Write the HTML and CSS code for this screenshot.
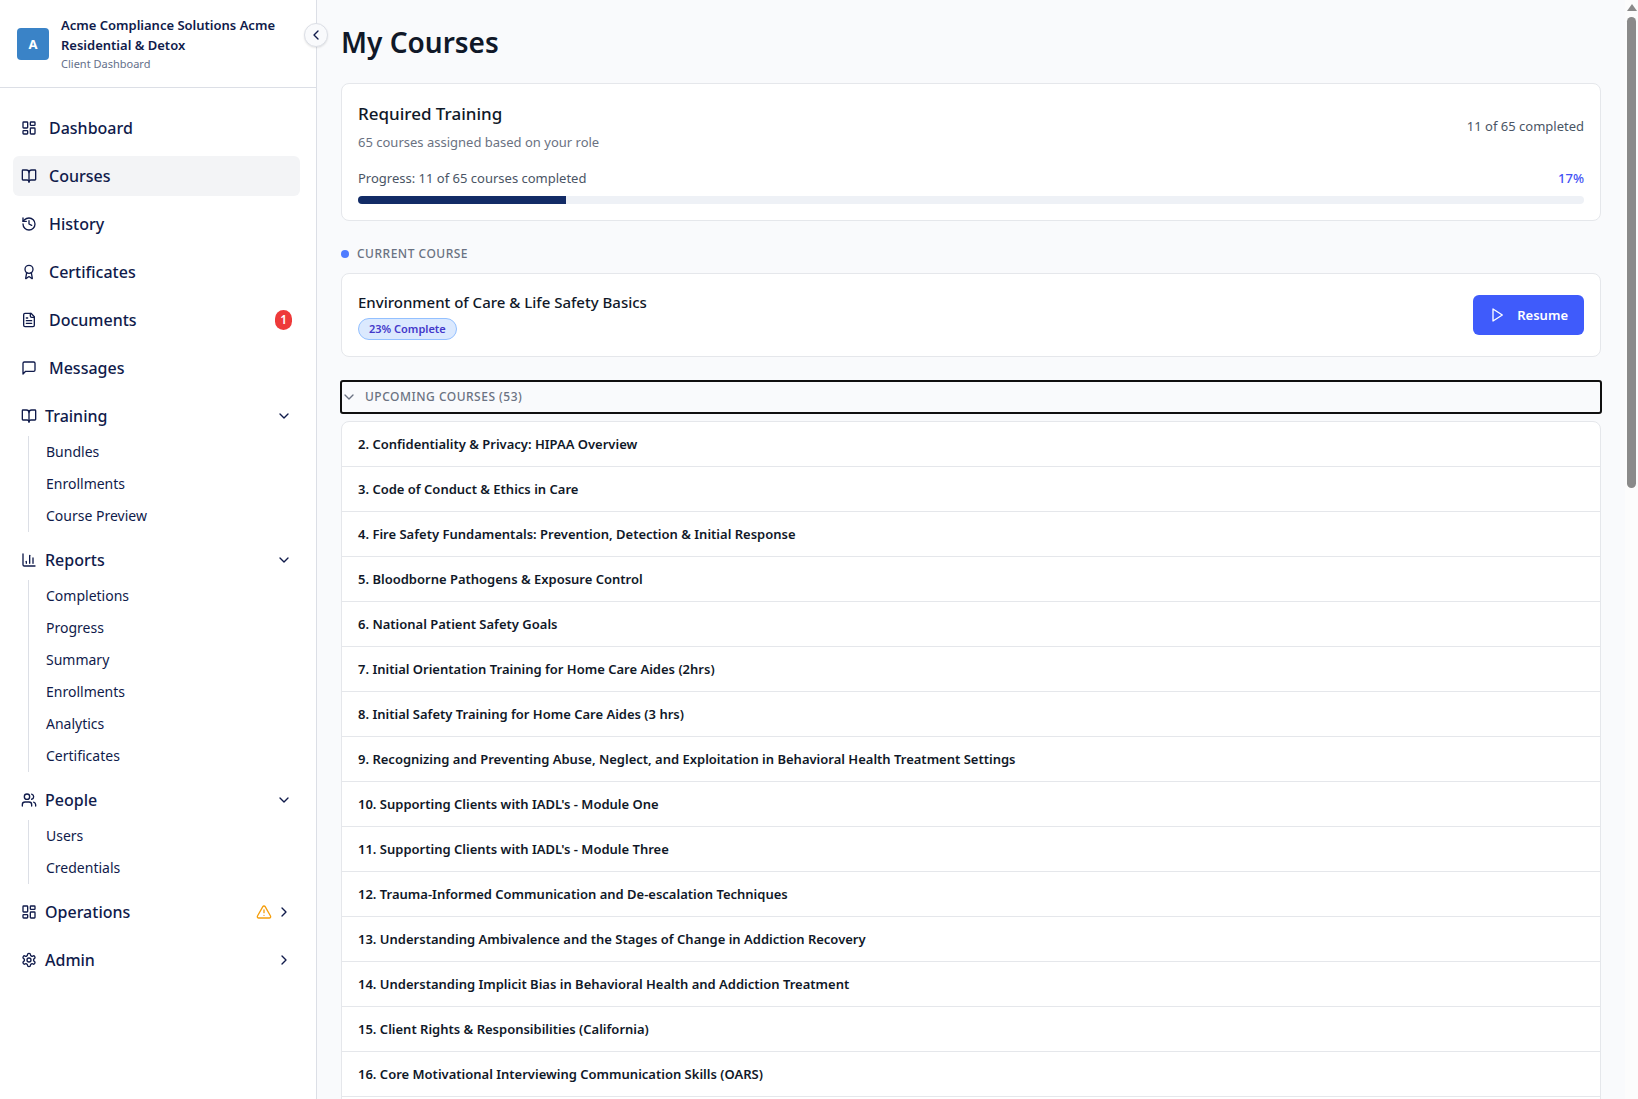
FILE: index.html
```html
<!DOCTYPE html>
<html lang="en">
<head>
<meta charset="utf-8">
<meta name="viewport" content="width=device-width, initial-scale=1">
<title>My Courses</title>
<link rel="stylesheet" href="styles.css">
</head>
<body>
<svg class="sprite" aria-hidden="true">
  <symbol id="i-dashboard" viewBox="0 0 24 24"><rect width="7" height="9" x="3" y="3" rx="1"/><rect width="7" height="5" x="14" y="3" rx="1"/><rect width="7" height="9" x="14" y="12" rx="1"/><rect width="7" height="5" x="3" y="16" rx="1"/></symbol>
  <symbol id="i-book" viewBox="0 0 24 24"><path d="M12 7v14"/><path d="M3 18a1 1 0 0 1-1-1V4a1 1 0 0 1 1-1h5a4 4 0 0 1 4 4 4 4 0 0 1 4-4h5a1 1 0 0 1 1 1v13a1 1 0 0 1-1 1h-6a3 3 0 0 0-3 3 3 3 0 0 0-3-3z"/></symbol>
  <symbol id="i-history" viewBox="0 0 24 24"><path d="M3 12a9 9 0 1 0 9-9 9.75 9.75 0 0 0-6.74 2.74L3 8"/><path d="M3 3v5h5"/><path d="M12 7v5l4 2"/></symbol>
  <symbol id="i-award" viewBox="0 0 24 24"><path d="m15.477 12.89 1.515 8.526a.5.5 0 0 1-.81.47l-3.58-2.687a1 1 0 0 0-1.197 0l-3.586 2.686a.5.5 0 0 1-.81-.469l1.514-8.526"/><circle cx="12" cy="8" r="6"/></symbol>
  <symbol id="i-file" viewBox="0 0 24 24"><path d="M15 2H6a2 2 0 0 0-2 2v16a2 2 0 0 0 2 2h12a2 2 0 0 0 2-2V7Z"/><path d="M14 2v4a2 2 0 0 0 2 2h4"/><path d="M10 9H8"/><path d="M16 13H8"/><path d="M16 17H8"/></symbol>
  <symbol id="i-message" viewBox="0 0 24 24"><path d="M21 15a2 2 0 0 1-2 2H7l-4 4V5a2 2 0 0 1 2-2h14a2 2 0 0 1 2 2z"/></symbol>
  <symbol id="i-chart" viewBox="0 0 24 24"><path d="M3 3v16a2 2 0 0 0 2 2h16"/><path d="M18 17V9"/><path d="M13 17V5"/><path d="M8 17v-3"/></symbol>
  <symbol id="i-users" viewBox="0 0 24 24"><path d="M16 21v-2a4 4 0 0 0-4-4H6a4 4 0 0 0-4 4v2"/><circle cx="9" cy="7" r="4"/><path d="M22 21v-2a4 4 0 0 0-3-3.87"/><path d="M16 3.13a4 4 0 0 1 0 7.75"/></symbol>
  <symbol id="i-settings" viewBox="0 0 24 24"><path d="M12.22 2h-.44a2 2 0 0 0-2 2v.18a2 2 0 0 1-1 1.73l-.43.25a2 2 0 0 1-2 0l-.15-.08a2 2 0 0 0-2.73.73l-.22.38a2 2 0 0 0 .73 2.73l.15.1a2 2 0 0 1 1 1.72v.51a2 2 0 0 1-1 1.74l-.15.09a2 2 0 0 0-.73 2.73l.22.38a2 2 0 0 0 2.73.73l.15-.08a2 2 0 0 1 2 0l.43.25a2 2 0 0 1 1 1.73V20a2 2 0 0 0 2 2h.44a2 2 0 0 0 2-2v-.18a2 2 0 0 1 1-1.73l.43-.25a2 2 0 0 1 2 0l.15.08a2 2 0 0 0 2.73-.73l.22-.39a2 2 0 0 0-.73-2.73l-.15-.08a2 2 0 0 1-1-1.74v-.5a2 2 0 0 1 1-1.74l.15-.09a2 2 0 0 0 .73-2.73l-.22-.38a2 2 0 0 0-2.73-.73l-.15.08a2 2 0 0 1-2 0l-.43-.25a2 2 0 0 1-1-1.73V4a2 2 0 0 0-2-2z"/><circle cx="12" cy="12" r="3"/></symbol>
  <symbol id="i-warning" viewBox="0 0 24 24"><path d="m21.73 18-8-14a2 2 0 0 0-3.48 0l-8 14A2 2 0 0 0 4 21h16a2 2 0 0 0 1.73-3"/><path d="M12 9v4"/><path d="M12 17h.01"/></symbol>
  <symbol id="i-down" viewBox="0 0 24 24"><path d="m6 9 6 6 6-6"/></symbol>
  <symbol id="i-right" viewBox="0 0 24 24"><path d="m9 18 6-6-6-6"/></symbol>
  <symbol id="i-left" viewBox="0 0 24 24"><path d="m15 18-6-6 6-6"/></symbol>
  <symbol id="i-play" viewBox="0 0 24 24"><path d="M6 3 20 12 6 21z"/></symbol>
</svg>

<div class="app">
  <aside class="sidebar">
    <header class="brand">
      <span class="brand-logo">A</span>
      <div class="brand-text">
        <p class="brand-name">Acme Compliance Solutions Acme Residential &amp; Detox</p>
        <p class="brand-sub">Client Dashboard</p>
      </div>
    </header>
    <button class="collapse" type="button" aria-label="Collapse sidebar"><svg class="icon"><use href="#i-left"/></svg></button>

    <nav class="nav" aria-label="Main">
      <a class="nav-item" href="#"><svg class="icon"><use href="#i-dashboard"/></svg>Dashboard</a>
      <a class="nav-item active" href="#" aria-current="page"><svg class="icon"><use href="#i-book"/></svg>Courses</a>
      <a class="nav-item" href="#"><svg class="icon"><use href="#i-history"/></svg>History</a>
      <a class="nav-item" href="#"><svg class="icon"><use href="#i-award"/></svg>Certificates</a>
      <a class="nav-item" href="#"><svg class="icon"><use href="#i-file"/></svg>Documents<span class="count">1</span></a>
      <a class="nav-item" href="#"><svg class="icon"><use href="#i-message"/></svg>Messages</a>

      <section>
        <button class="nav-group" type="button" aria-expanded="true"><svg class="icon"><use href="#i-book"/></svg><span class="nav-label">Training</span><svg class="icon"><use href="#i-down"/></svg></button>
        <div class="subnav">
          <a href="#">Bundles</a>
          <a href="#">Enrollments</a>
          <a href="#">Course Preview</a>
        </div>
      </section>

      <section>
        <button class="nav-group" type="button" aria-expanded="true"><svg class="icon"><use href="#i-chart"/></svg><span class="nav-label">Reports</span><svg class="icon"><use href="#i-down"/></svg></button>
        <div class="subnav">
          <a href="#">Completions</a>
          <a href="#">Progress</a>
          <a href="#">Summary</a>
          <a href="#">Enrollments</a>
          <a href="#">Analytics</a>
          <a href="#">Certificates</a>
        </div>
      </section>

      <section>
        <button class="nav-group" type="button" aria-expanded="true"><svg class="icon"><use href="#i-users"/></svg><span class="nav-label">People</span><svg class="icon"><use href="#i-down"/></svg></button>
        <div class="subnav">
          <a href="#">Users</a>
          <a href="#">Credentials</a>
        </div>
      </section>

      <button class="nav-group" type="button" aria-expanded="false"><svg class="icon"><use href="#i-dashboard"/></svg><span class="nav-label">Operations</span><svg class="icon warn"><use href="#i-warning"/></svg><svg class="icon"><use href="#i-right"/></svg></button>
      <button class="nav-group" type="button" aria-expanded="false"><svg class="icon"><use href="#i-settings"/></svg><span class="nav-label">Admin</span><svg class="icon"><use href="#i-right"/></svg></button>
    </nav>
  </aside>

  <main class="content">
    <h1>My Courses</h1>

    <section class="card">
      <div class="row">
        <div>
          <h2>Required Training</h2>
          <p class="muted">65 courses assigned based on your role</p>
        </div>
        <p>11 of 65 completed</p>
      </div>
      <div class="row progress-row">
        <p>Progress: 11 of 65 courses completed</p>
        <p class="percent">17%</p>
      </div>
      <div class="bar" role="progressbar" aria-label="Required training" aria-valuenow="17" aria-valuemin="0" aria-valuemax="100"><div class="bar-fill" style="width: 17%"></div></div>
    </section>

    <h3 class="eyebrow"><span class="dot"></span>Current Course</h3>
    <section class="card current row">
      <div>
        <h4>Environment of Care &amp; Life Safety Basics</h4>
        <span class="badge">23% Complete</span>
      </div>
      <button class="resume" type="button"><svg class="icon"><use href="#i-play"/></svg>Resume</button>
    </section>

    <button class="eyebrow toggle" type="button" aria-expanded="true"><svg class="icon"><use href="#i-down"/></svg>Upcoming Courses (53)</button>
    <ol class="courses">
      <li>2. Confidentiality &amp; Privacy: HIPAA Overview</li>
      <li>3. Code of Conduct &amp; Ethics in Care</li>
      <li>4. Fire Safety Fundamentals: Prevention, Detection &amp; Initial Response</li>
      <li>5. Bloodborne Pathogens &amp; Exposure Control</li>
      <li>6. National Patient Safety Goals</li>
      <li>7. Initial Orientation Training for Home Care Aides (2hrs)</li>
      <li>8. Initial Safety Training for Home Care Aides (3 hrs)</li>
      <li>9. Recognizing and Preventing Abuse, Neglect, and Exploitation in Behavioral Health Treatment Settings</li>
      <li>10. Supporting Clients with IADL's - Module One</li>
      <li>11. Supporting Clients with IADL's - Module Three</li>
      <li>12. Trauma-Informed Communication and De-escalation Techniques</li>
      <li>13. Understanding Ambivalence and the Stages of Change in Addiction Recovery</li>
      <li>14. Understanding Implicit Bias in Behavioral Health and Addiction Treatment</li>
      <li>15. Client Rights &amp; Responsibilities (California)</li>
      <li>16. Core Motivational Interviewing Communication Skills (OARS)</li>
      <li></li>
    </ol>
  </main>

  <div class="scrollbar" aria-hidden="true">
    <span class="scroll-arrow"></span>
    <span class="scroll-thumb"></span>
  </div>
</div>
</body>
</html>
```
FILE: styles.css
```css
*, *::before, *::after { box-sizing: border-box; }

body {
  margin: 0;
  font-family: "Noto Sans", "Open Sans", sans-serif;
  font-size: 13px;
  line-height: 20px;
  color: #4a5565;
  background: #f9fafc;
}

h1, h2, h3, h4, p, ol { margin: 0; padding: 0; }
button { font: inherit; color: inherit; background: none; border: 0; padding: 0; cursor: pointer; }
a { color: inherit; text-decoration: none; }

.sprite { display: none; }

.icon {
  width: 16px;
  height: 16px;
  flex: none;
  fill: none;
  stroke: currentColor;
  stroke-width: 2;
  stroke-linecap: round;
  stroke-linejoin: round;
}

.app { display: flex; height: 100vh; overflow: hidden; }

/* Sidebar */
.sidebar {
  position: relative;
  flex: none;
  width: 317px;
  background: #fff;
  border-right: 1px solid #dcdfe6;
  color: #101b4b;
}

.brand {
  display: flex;
  align-items: center;
  gap: 12px;
  padding: 15px 16px 15px 17px;
  border-bottom: 1px solid #dcdfe6;
}

.brand-logo {
  flex: none;
  display: grid;
  place-items: center;
  width: 32px;
  height: 32px;
  border-radius: 4px;
  background: #3a83c7;
  color: #fff;
  font-size: 13px;
  font-weight: 700;
}

.brand-name { font-size: 13px; font-weight: 600; }
.brand-sub { font-size: 11px; line-height: 17px; color: #64708a; }

.collapse {
  position: absolute;
  top: 23px;
  right: -12px;
  display: grid;
  place-items: center;
  width: 24px;
  height: 24px;
  border: 1px solid #dcdfe6;
  border-radius: 50%;
  background: #f9fafc;
  box-shadow: 0 1px 2px rgba(0, 0, 0, 0.1);
}

.nav {
  display: flex;
  flex-direction: column;
  gap: 8px;
  padding: 20px 16px 20px 13px;
  font-size: 16px;
  font-weight: 500;
}

.nav-item, .nav-group {
  display: flex;
  align-items: center;
  width: 100%;
  height: 40px;
  padding: 0 8px;
  border-radius: 6px;
  text-align: left;
}

.nav-item { gap: 12px; }
.nav-group { gap: 8px; }
.nav-group .nav-label { flex: 1; }
.active { background: #f3f4f6; }
.warn { color: #f59e0b; }
.nav-group .warn { margin-right: -4px; }

.count {
  margin-left: auto;
  padding: 0 5px;
  border-radius: 10px;
  background: #ee3a3a;
  color: #fff;
  font-size: 12px;
  font-weight: 600;
}

.subnav {
  display: flex;
  flex-direction: column;
  margin-left: 15px;
  padding-left: 17px;
  border-left: 1px solid #dcdfe6;
  font-size: 14px;
  font-weight: 400;
  line-height: 32px;
}

/* Main column */
.content {
  flex: 1;
  min-width: 0;
  padding: 24px 24px 0;
}

h1 {
  margin-bottom: 23px;
  font-size: 28px;
  font-weight: 600;
  line-height: 36px;
  color: #101828;
}

.card {
  padding: 16px;
  border: 1px solid #e5e7eb;
  border-radius: 8px;
  background: #fff;
}

.row { display: flex; align-items: center; justify-content: space-between; }

h2 { font-size: 17px; font-weight: 500; line-height: 28px; color: #101828; margin-bottom: 4px; }
.muted { color: #6a7282; }
.progress-row { margin: 16px 0 8px; }
.percent { color: #4353f5; font-weight: 500; }

.bar { height: 8px; border-radius: 4px; background: #eef1f6; overflow: hidden; }
.bar-fill { height: 100%; background: #122b66; }

.eyebrow {
  display: flex;
  align-items: center;
  gap: 8px;
  margin: 25px 0 11px;
  font-size: 12px;
  font-weight: 500;
  line-height: 16px;
  letter-spacing: 0.5px;
  text-transform: uppercase;
  color: #6a7282;
}

.dot { width: 8px; height: 8px; border-radius: 50%; background: #4f7cff; }

.current { height: 84px; }
h4 { font-size: 15px; font-weight: 500; line-height: 24px; color: #101828; }

.badge {
  display: block;
  width: fit-content;
  margin-top: 4px;
  padding: 0 10px;
  border: 1px solid #93c0ff;
  border-radius: 11px;
  background: #dbe9fe;
  color: #4338ca;
  font-size: 11px;
  font-weight: 600;
}

.resume {
  display: flex;
  align-items: center;
  gap: 12px;
  height: 40px;
  padding: 0 16px;
  border-radius: 6px;
  background: #3f5bfb;
  color: #fff;
  font-weight: 600;
}

.toggle {
  width: 100%;
  height: 32px;
  margin: 24px 0 8px;
  border-radius: 2px;
  outline: 2px solid #101010;
  outline-offset: -1px;
}

.courses {
  list-style: none;
  border: 1px solid #e5e7eb;
  border-radius: 8px;
  background: #fff;
  font-weight: 600;
  color: #101828;
}

.courses li { height: 45px; padding: 12px 16px; border-bottom: 1px solid #e5e7eb; }

/* Scroll indicator */
.scrollbar {
  flex: none;
  display: flex;
  flex-direction: column;
  align-items: center;
  gap: 6px;
  width: 13px;
  padding-top: 4px;
  background: #fcfcfc;
}

.scroll-arrow { border: 5px solid transparent; border-top: 0; border-bottom: 7px solid #8a8a8a; }
.scroll-thumb { width: 9px; height: 43%; border-radius: 5px; background: #8a8a8a; }
```
